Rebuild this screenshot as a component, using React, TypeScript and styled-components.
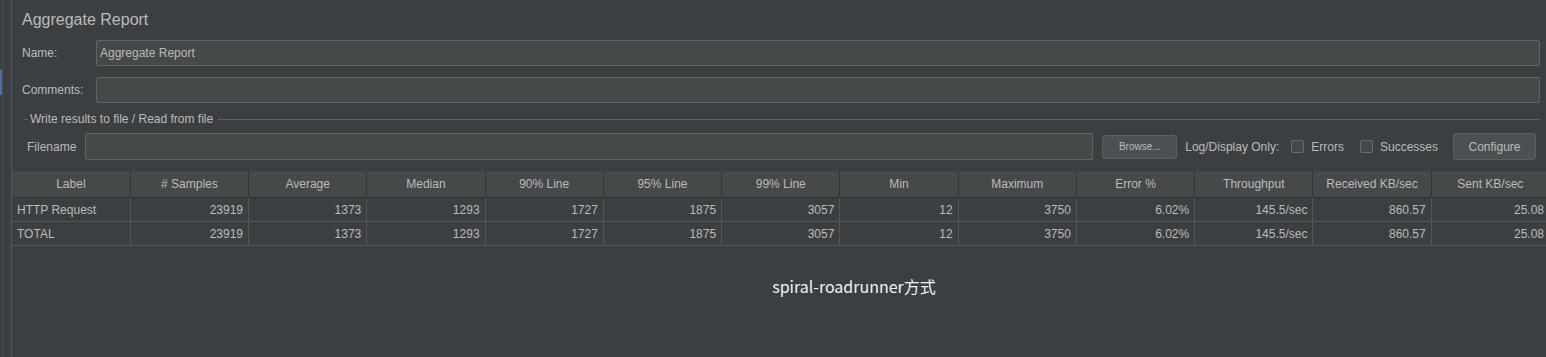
import React from 'react';
import styled, { createGlobalStyle } from 'styled-components';

const GlobalStyle = createGlobalStyle`
  html, body {
    margin: 0;
    padding: 0;
    background: #3c3f41;
    overflow: hidden;
  }
  body {
    font-family: "Liberation Sans", Arial, sans-serif;
    font-size: 12px;
    color: #bbbbbb;
  }
`;

const Page = styled.div`
  display: flex;
  width: 1546px;
  height: 357px;
  background: #3c3f41;
  overflow: hidden;
`;

const Sidebar = styled.div`
  position: relative;
  width: 12px;
  flex-shrink: 0;
  border-right: 1px solid #555859;
  box-sizing: border-box;
  &::before {
    content: '';
    position: absolute;
    left: 2px;
    top: 0;
    bottom: 0;
    width: 1px;
    background: #4a4d4f;
  }
`;

const SelectedMark = styled.div`
  position: absolute;
  left: 0;
  top: 70px;
  width: 2px;
  height: 25px;
  background: #4b6eaf;
`;

const Main = styled.div`
  flex: 1;
  display: flex;
  flex-direction: column;
  min-width: 0;
`;

const Title = styled.div`
  padding: 9px 0 0 10px;
  height: 22px;
  font-size: 16px;
  line-height: 22px;
  color: #bbbbbb;
`;

const FormRow = styled.div<{ $top: number }>`
  display: flex;
  align-items: center;
  margin-top: ${(p) => p.$top}px;
  padding: 0 6px 0 10px;
`;

const FieldLabel = styled.div<{ $width: number }>`
  width: ${(p) => p.$width}px;
  flex-shrink: 0;
`;

const TextField = styled.div<{ $height: number }>`
  flex: 1;
  height: ${(p) => p.$height}px;
  box-sizing: border-box;
  background: #45494a;
  border: 1px solid #646464;
  border-radius: 2px;
  padding: 0 3px;
  display: flex;
  align-items: center;
  font-size: 12px;
  color: #bbbbbb;
`;

const Legend = styled.div`
  display: flex;
  align-items: center;
  margin: 9px 6px 0 12px;
  height: 14px;
  gap: 2px;
  &::before {
    content: '';
    width: 4px;
    height: 1px;
    background: #5e6060;
  }
  &::after {
    content: '';
    flex: 1;
    height: 1px;
    margin-left: 3px;
    background: #5e6060;
  }
`;

const FileRow = styled.div`
  display: flex;
  align-items: center;
  margin-top: 7px;
  padding: 0 10px 0 15px;
  height: 27px;
`;

const FileLabel = styled.div`
  width: 58px;
  flex-shrink: 0;
`;

const Button = styled.div<{ $small?: boolean }>`
  display: flex;
  align-items: center;
  justify-content: center;
  box-sizing: border-box;
  height: ${(p) => (p.$small ? 24 : 27)}px;
  width: ${(p) => (p.$small ? 75 : 83)}px;
  font-size: ${(p) => (p.$small ? 10 : 12)}px;
  background: #4c5052;
  border: 1px solid #5e6060;
  border-radius: 3px;
  color: #bbbbbb;
  flex-shrink: 0;
`;

const InlineText = styled.span<{ $left: number }>`
  margin-left: ${(p) => p.$left}px;
  white-space: nowrap;
`;

const Check = styled.span<{ $left: number }>`
  display: inline-block;
  margin-left: ${(p) => p.$left}px;
  width: 13px;
  height: 13px;
  box-sizing: border-box;
  border: 1px solid #6b6b6b;
  border-radius: 2px;
  background: #43494a;
  flex-shrink: 0;
`;

const Table = styled.table`
  margin-top: 11px;
  border-collapse: collapse;
  table-layout: fixed;
  width: 1538px;
  flex-shrink: 0;
`;

const HeadCell = styled.th`
  height: 26px;
  padding: 0;
  background: #45494a;
  border-right: 1px solid #333638;
  border-bottom: 1px solid #333638;
  font-weight: normal;
  text-align: center;
  color: #bbbbbb;
  font-size: 12px;
  white-space: nowrap;
  overflow: hidden;
`;

const Cell = styled.td<{ $left?: boolean }>`
  height: 23px;
  padding: 0 5px;
  border-right: 1px solid #515658;
  border-bottom: 1px solid #515658;
  text-align: ${(p) => (p.$left ? 'left' : 'right')};
  font-size: 12px;
  color: #bbbbbb;
  white-space: nowrap;
  overflow: hidden;
`;

const Caption = styled.div`
  margin-top: 28px;
  padding-left: 150px;
  text-align: center;
  font-family: "Noto Sans CJK SC", "Noto Sans", sans-serif;
  font-size: 16px;
  color: #f2f2f2;
`;

const headers = [
  'Label', '# Samples', 'Average', 'Median', '90% Line', '95% Line', '99% Line',
  'Min', 'Maximum', 'Error %', 'Throughput', 'Received KB/sec', 'Sent KB/sec',
];

const rows = [
  ['HTTP Request', '23919', '1373', '1293', '1727', '1875', '3057', '12', '3750', '6.02%', '145.5/sec', '860.57', '25.08'],
  ['TOTAL', '23919', '1373', '1293', '1727', '1875', '3057', '12', '3750', '6.02%', '145.5/sec', '860.57', '25.08'],
];

const App: React.FC = () => {
  return (
    <Page>
      <GlobalStyle />
      <Sidebar>
        <SelectedMark />
      </Sidebar>
      <Main>
        <Title>Aggregate Report</Title>
        <FormRow $top={9}>
          <FieldLabel $width={74}>Name:</FieldLabel>
          <TextField $height={26}>Aggregate Report</TextField>
        </FormRow>
        <FormRow $top={11}>
          <FieldLabel $width={74}>Comments:</FieldLabel>
          <TextField $height={26} />
        </FormRow>
        <Legend>Write results to file / Read from file</Legend>
        <FileRow>
          <FileLabel>Filename</FileLabel>
          <TextField $height={27} />
          <InlineText $left={9} />
          <Button $small>Browse...</Button>
          <InlineText $left={8}>Log/Display Only:</InlineText>
          <Check $left={12} />
          <InlineText $left={7}>Errors</InlineText>
          <Check $left={16} />
          <InlineText $left={7}>Successes</InlineText>
          <InlineText $left={15} />
          <Button>Configure</Button>
        </FileRow>
        <Table>
          <thead>
            <tr>
              {headers.map((h) => (
                <HeadCell key={h}>{h}</HeadCell>
              ))}
            </tr>
          </thead>
          <tbody>
            {rows.map((r) => (
              <tr key={r[0]}>
                {r.map((v, i) => (
                  <Cell key={i} $left={i === 0}>{v}</Cell>
                ))}
              </tr>
            ))}
          </tbody>
        </Table>
        <Caption>spiral-roadrunner方式</Caption>
      </Main>
    </Page>
  );
};

export default App;
